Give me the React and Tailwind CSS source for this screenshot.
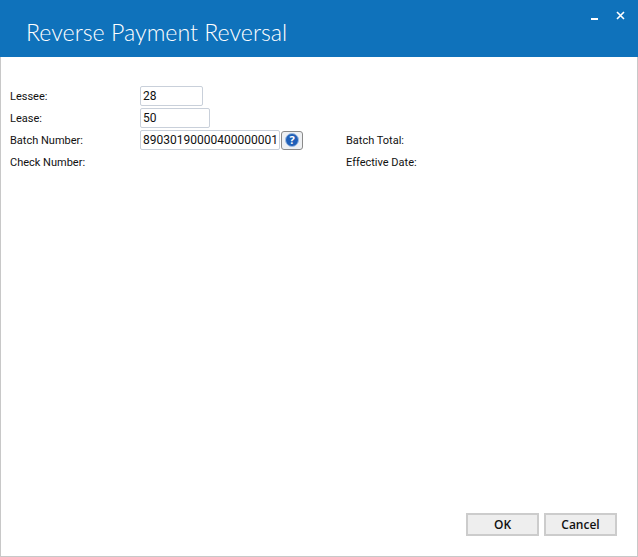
import React from 'react';

const labelClass = "pt-[1px] text-[11px] leading-[22px] text-[#111] whitespace-nowrap font-['Roboto',sans-serif]";
const inputClass = "h-[20px] border border-[#c9d0da] rounded-[2px] px-[2px] text-[12px] text-[#111] bg-white outline-none font-['Roboto',sans-serif]";

const Row = ({ label, children }) => (
  <div className="flex items-center h-[22px]">
    <div className={`${labelClass} w-[130px]`}>{label}</div>
    {children}
  </div>
);

const App = () => {
  return (
    <div className="w-[638px] h-[557px] flex flex-col bg-white font-['Open_Sans',sans-serif] overflow-hidden">
      {/* Header */}
      <div className="h-[57px] shrink-0 bg-[#0f72bb] flex items-start justify-between">
        <h1 className="pl-[26px] pt-[16px] text-[23.2px] leading-[33px] font-light text-white font-['Lato',sans-serif]">Reverse Payment Reversal</h1>
        <div className="flex items-start pt-[11px] pr-[13px] gap-[17px]">
          <svg width="8" height="8" viewBox="0 0 8 8" className="mt-[3px]"><rect x="0" y="4" width="7" height="2" fill="#fff" /></svg>
          <svg width="9" height="9" viewBox="0 0 9 9"><path d="M1 1l7 7M8 1L1 8" stroke="#fff" strokeWidth="1.6" fill="none" /></svg>
        </div>
      </div>

      {/* Body */}
      <div className="flex-1 flex flex-col border border-t-0 border-[#c8c8c8] pl-[9px] pr-[20px] pt-[28px] pb-[20px]">
        <div className="flex flex-col">
          <Row label="Lessee:">
            <input readOnly value="28" className={`${inputClass} w-[63px]`} />
          </Row>
          <Row label="Lease:">
            <input readOnly value="50" className={`${inputClass} w-[70px]`} />
          </Row>
          <Row label="Batch Number:">
            <input readOnly value="89030190000400000001" className={`${inputClass} w-[140px] border-[#7eaed3]`} />
            <button className="ml-[1px] w-[22px] h-[19px] border border-[#8a8a8a] rounded-[3px] bg-[#eef0f3] flex items-center justify-center">
              <span className="w-[14px] h-[14px] rounded-full bg-[#1f5fb8] border border-[#9dbbe2] text-white text-[11px] leading-[12px] font-bold text-center">?</span>
            </button>
            <div className={`${labelClass} ml-[43px]`}>Batch Total:</div>
          </Row>
          <Row label="Check Number:">
            <div className="w-[163px]" />
            <div className={`${labelClass} ml-[43px]`}>Effective Date:</div>
          </Row>
        </div>

        {/* Footer buttons */}
        <div className="mt-auto flex justify-end gap-[5px]">
          <button className="w-[73px] h-[23px] border-2 border-[#cccccc] bg-[#eeeeee] text-[12px] font-semibold text-[#111]">OK</button>
          <button className="w-[73px] h-[23px] border-2 border-[#cccccc] bg-[#eeeeee] text-[12px] font-semibold text-[#111]">Cancel</button>
        </div>
      </div>
    </div>
  );
};

export default App;
